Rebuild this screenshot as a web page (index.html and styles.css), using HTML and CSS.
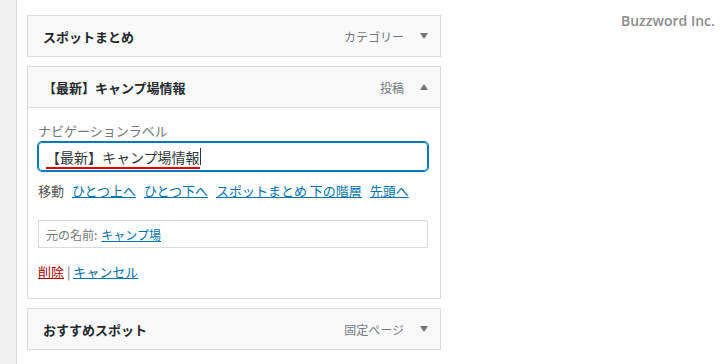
FILE: index.html
```html
<!DOCTYPE html>
<html lang="ja">
<head>
    <meta charset="UTF-8">
    <meta name="viewport" content="width=device-width, initial-scale=1.0">
    <title>メニュー項目</title>
    <link rel="stylesheet" href="styles.css">
</head>
<body>

    <div class="page">
        <div class="side"></div>

        <div class="menu">
            <div class="item">
                <div class="item-bar">
                    <span class="item-title">スポットまとめ</span>
                    <span class="item-type">カテゴリー</span>
                    <span class="arrow down"></span>
                </div>
            </div>

            <div class="item open">
                <div class="item-bar">
                    <span class="item-title">【最新】キャンプ場情報</span>
                    <span class="item-type">投稿</span>
                    <span class="arrow up"></span>
                </div>
                <div class="item-body">
                    <label class="field-label" for="navLabel">ナビゲーションラベル</label>
                    <div class="input-wrap">
                        <span class="input-text">【最新】キャンプ場情報</span><span class="caret"></span>
                    </div>
                    <div class="move">
                        移動
                        <a href="#">ひとつ上へ</a>
                        <a href="#">ひとつ下へ</a>
                        <a href="#">スポットまとめ 下の階層</a>
                        <a href="#">先頭へ</a>
                    </div>
                    <div class="original">
                        元の名前: <a href="#">キャンプ場</a>
                    </div>
                    <div class="actions">
                        <a href="#" class="delete">削除</a> | <a href="#">キャンセル</a>
                    </div>
                </div>
            </div>

            <div class="item">
                <div class="item-bar">
                    <span class="item-title">おすすめスポット</span>
                    <span class="item-type">固定ページ</span>
                    <span class="arrow down"></span>
                </div>
            </div>
        </div>
    </div>

    <div class="watermark">Buzzword Inc.</div>

</body>
</html>
```

FILE: styles.css
```css
body {
    margin: 0;
    background: #fff;
    font-family: "Noto Sans CJK JP", "Noto Sans", sans-serif;
    color: #444;
}
.page {
    display: flex;
    height: 364px;
}
.side {
    width: 16px;
    background-color: #f1f1f1;
    border-right: 1px solid #dcdcdc;
}
.menu {
    padding: 15px 0 0 10px;
    width: 414px;
}
.item {
    border: 1px solid #dcdcdc;
    margin-bottom: 9px;
}
.item-bar {
    display: flex;
    align-items: center;
    height: 40px;
    padding: 0 12px 0 15px;
    background-color: #f9f9f9;
}
.open .item-bar {
    border-bottom: 1px solid #dcdcdc;
}
.item-title {
    flex: 1;
    font-size: 13px;
    font-weight: 700;
    color: #23282d;
}
.item-type {
    font-size: 12px;
    color: #72777c;
    margin-right: 16px;
}
.arrow {
    width: 0;
    height: 0;
    border-left: 4px solid transparent;
    border-right: 4px solid transparent;
}
.arrow.down {
    border-top: 6px solid #72777c;
}
.arrow.up {
    border-bottom: 6px solid #72777c;
}
.item-body {
    padding: 13px 12px 10px 10px;
    font-size: 13px;
}
.field-label {
    display: block;
    color: #72777c;
    line-height: 20px;
}
.input-wrap {
    display: flex;
    align-items: center;
    height: 27px;
    margin-top: 1px;
    padding-left: 7px;
    border: 1px solid #007cba;
    border-radius: 4px;
    box-shadow: 0 0 0 1px #007cba;
    color: #32373c;
}
.input-text {
    font-size: 14px;
    line-height: 20px;
    border-bottom: 2px solid #e60000;
    padding-top: 2px;
}
.caret {
    width: 1px;
    height: 17px;
    background: #333;
}
.move {
    margin-top: 9px;
    line-height: 22px;
    color: #555;
}
.move a {
    margin-left: 5px;
}
a {
    color: #0073aa;
}
.original {
    margin-top: 18px;
    height: 26px;
    border: 1px solid #dcdcdc;
    padding-left: 7px;
    display: flex;
    align-items: center;
    gap: 4px;
    font-size: 12px;
    color: #72777c;
}
.actions {
    margin-top: 14px;
    line-height: 20px;
    color: #72777c;
    padding-bottom: 6px;
}
.actions .delete {
    color: #a00;
}
.watermark {
    position: absolute;
    top: 11px;
    left: 621px;
    font-family: "Open Sans", sans-serif;
    font-size: 14px;
    font-weight: 600;
    color: #8c8c8c;
}
```
